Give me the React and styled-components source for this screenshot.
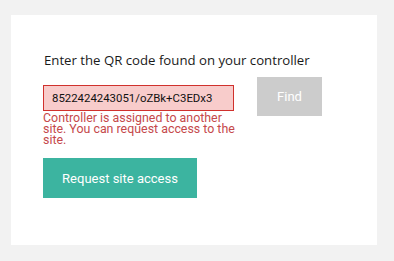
import React, { useState } from 'react';
import styled, { createGlobalStyle } from 'styled-components';

const GlobalStyle = createGlobalStyle`
    html, body {
        margin: 0;
        padding: 0;
        background: #f2f2f2;
    }
    * {
        box-sizing: border-box;
    }
`;

function App() {
    const [code, setCode] = useState('8522424243051/oZBk+C3EDx3');

    return (
        <PageStyled>
            <GlobalStyle />
            <div className="card">
                <h2>Enter the QR code found on your controller</h2>
                <div className="form-row">
                    <div className="input-control">
                        <input
                            type="text"
                            value={code}
                            onChange={(e) => setCode(e.target.value)}
                        />
                        <p className="error">
                            Controller is assigned to another site. You can request access to the site.
                        </p>
                    </div>
                    <button type="button" className="find-btn" disabled>
                        Find
                    </button>
                </div>
                <button type="button" className="request-btn">
                    Request site access
                </button>
            </div>
        </PageStyled>
    );
}

const PageStyled = styled.div`
    padding: 15px 17px 16px 11px;

    .card {
        background: #ffffff;
        height: 230px;
        padding: 35px 32px 0 32px;
    }

    h2 {
        margin: 0 0 0 1px;
        font-family: "Open Sans", sans-serif;
        font-weight: 400;
        font-size: 13.2px;
        line-height: 20px;
        color: #1a1a1a;
    }

    .form-row {
        display: flex;
        align-items: flex-start;
        gap: 23px;
        margin-top: 7px;
    }

    .input-control {
        width: 191px;
        padding-top: 8px;
    }

    .input-control input {
        width: 100%;
        height: 26px;
        border: 1px solid #d0312d;
        background: #f8cccb;
        padding: 0 8px;
        font-family: Roboto, sans-serif;
        font-size: 11.4px;
        color: #111111;
        outline: none;
        border-radius: 0;
    }

    .error {
        margin: 2px -8px 0 0;
        font-family: Roboto, sans-serif;
        font-size: 12.4px;
        line-height: 10.8px;
        color: #c5494b;
    }

    .find-btn {
        width: 65px;
        height: 39px;
        border: none;
        background: #cccccc;
        color: #ffffff;
        font-family: Roboto, sans-serif;
        font-size: 13px;
        cursor: default;
    }

    .request-btn {
        display: block;
        margin-top: 13px;
        width: 154px;
        height: 40px;
        border: none;
        background: #3cb4a0;
        color: #ffffff;
        font-family: Roboto, sans-serif;
        font-size: 13px;
        cursor: pointer;
    }
`;

export default App;
